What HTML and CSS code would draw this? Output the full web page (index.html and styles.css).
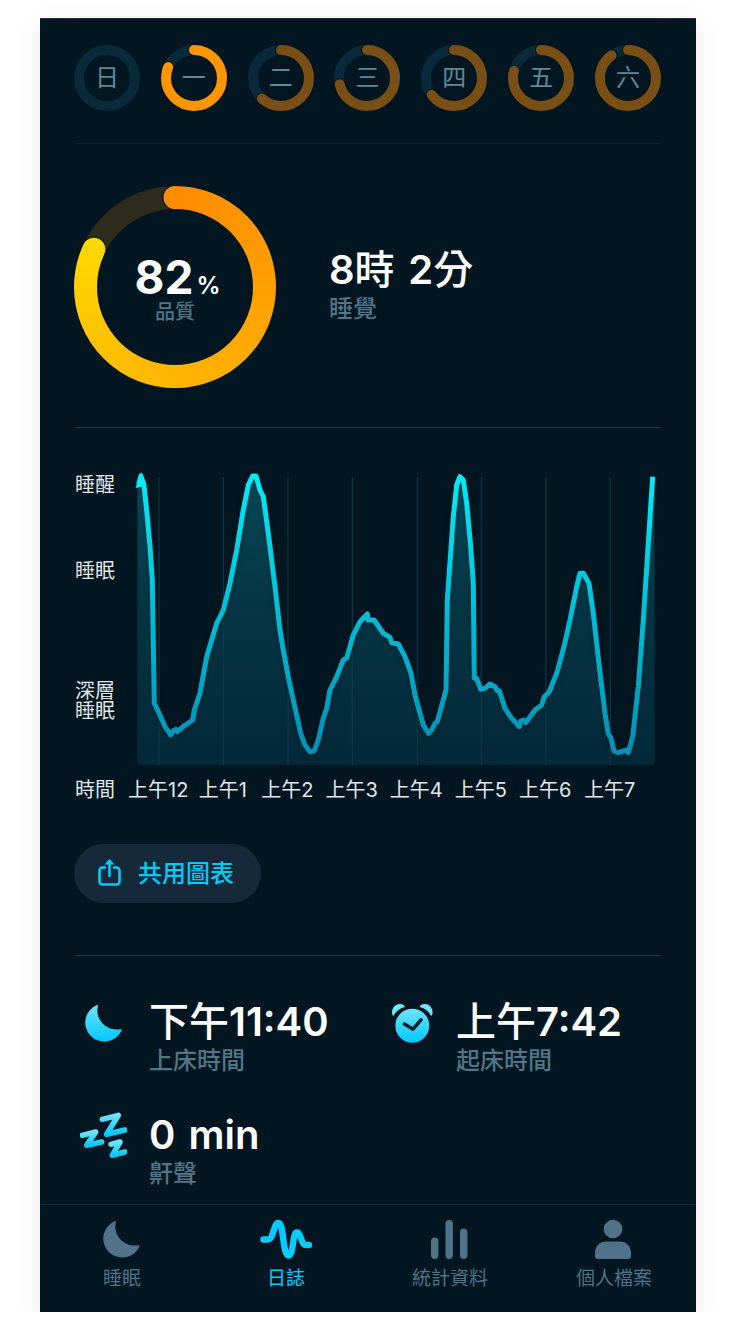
FILE: index.html
```html
<!DOCTYPE html>
<html>
<head>
  <title>Sleep journal</title>
  <meta name="viewport" content="width=device-width, initial-scale=1">
  <link rel="stylesheet" href="styles.css">
</head>
<body>
<div class="phone">

  <div class="week">
    <div class="day"><svg viewBox="0 0 66 66"><circle class="track" cx="33" cy="33" r="28"/></svg><span>日</span></div>
    <div class="day"><svg viewBox="0 0 66 66"><circle class="track" cx="33" cy="33" r="28"/><circle class="halo" cx="33" cy="33" r="28" pathLength="360" stroke-dasharray="293 360" transform="rotate(-90 33 33)"/><circle class="arc today" cx="33" cy="33" r="28" pathLength="360" stroke-dasharray="293 360" transform="rotate(-90 33 33)"/></svg><span>一</span></div>
    <div class="day"><svg viewBox="0 0 66 66"><circle class="track" cx="33" cy="33" r="28"/><circle class="halo" cx="33" cy="33" r="28" pathLength="360" stroke-dasharray="223 360" transform="rotate(-90 33 33)"/><circle class="arc" cx="33" cy="33" r="28" pathLength="360" stroke-dasharray="223 360" transform="rotate(-90 33 33)"/></svg><span>二</span></div>
    <div class="day"><svg viewBox="0 0 66 66"><circle class="track" cx="33" cy="33" r="28"/><circle class="halo" cx="33" cy="33" r="28" pathLength="360" stroke-dasharray="257 360" transform="rotate(-90 33 33)"/><circle class="arc" cx="33" cy="33" r="28" pathLength="360" stroke-dasharray="257 360" transform="rotate(-90 33 33)"/></svg><span>三</span></div>
    <div class="day"><svg viewBox="0 0 66 66"><circle class="track" cx="33" cy="33" r="28"/><circle class="halo" cx="33" cy="33" r="28" pathLength="360" stroke-dasharray="233 360" transform="rotate(-90 33 33)"/><circle class="arc" cx="33" cy="33" r="28" pathLength="360" stroke-dasharray="233 360" transform="rotate(-90 33 33)"/></svg><span>四</span></div>
    <div class="day"><svg viewBox="0 0 66 66"><circle class="track" cx="33" cy="33" r="28"/><circle class="halo" cx="33" cy="33" r="28" pathLength="360" stroke-dasharray="285 360" transform="rotate(-90 33 33)"/><circle class="arc" cx="33" cy="33" r="28" pathLength="360" stroke-dasharray="285 360" transform="rotate(-90 33 33)"/></svg><span>五</span></div>
    <div class="day"><svg viewBox="0 0 66 66"><circle class="track" cx="33" cy="33" r="28"/><circle class="halo" cx="33" cy="33" r="28" pathLength="360" stroke-dasharray="324 360" transform="rotate(-90 33 33)"/><circle class="arc" cx="33" cy="33" r="28" pathLength="360" stroke-dasharray="324 360" transform="rotate(-90 33 33)"/></svg><span>六</span></div>
  </div>

  <div class="summary">
    <div class="quality">
      <svg viewBox="0 0 202 202">
        <defs>
          <mask id="quality-mask" maskUnits="userSpaceOnUse" x="0" y="0" width="202" height="202">
            <circle cx="101" cy="101" r="89.5" fill="none" stroke="#fff" stroke-width="23" stroke-linecap="round" pathLength="360" stroke-dasharray="295 360" transform="rotate(-90 101 101)"/>
          </mask>
        </defs>
        <circle class="quality-track" cx="101" cy="101" r="89.5"/>
        <circle class="quality-halo" cx="101" cy="101" r="89.5" pathLength="360" stroke-dasharray="295 360" transform="rotate(-90 101 101)"/>
        <foreignObject x="0" y="0" width="202" height="202" mask="url(#quality-mask)">
          <div class="quality-fill"></div>
        </foreignObject>
      </svg>
      <div class="quality-text">
        <div class="quality-num">82<small>%</small></div>
        <div class="quality-label">品質</div>
      </div>
    </div>
    <div class="duration">
      <div class="value"><b>8</b>時 <b>2</b>分</div>
      <div class="label">睡覺</div>
    </div>
  </div>

  <div class="chart">
    <div class="y-labels">
      <span>睡醒</span>
      <span class="y-sleep">睡眠</span>
      <span class="y-deep">深層<br>睡眠</span>
    </div>
    <svg class="graph" viewBox="133 470 530 300" width="530" height="300">
      <defs>
        <linearGradient id="line-grad" gradientUnits="userSpaceOnUse" x1="0" y1="476" x2="0" y2="752">
          <stop offset="0" stop-color="#00ecf8"/>
          <stop offset="1" stop-color="#008fb4"/>
        </linearGradient>
        <linearGradient id="area-grad" gradientUnits="userSpaceOnUse" x1="0" y1="476" x2="0" y2="765">
          <stop offset="0" stop-color="#064857"/>
          <stop offset="0.45" stop-color="#043544"/>
          <stop offset="1" stop-color="#032838"/>
        </linearGradient>
      </defs>
      <path fill="url(#area-grad)" d="M137.5 765 L137.5 487 L141 476 L144 485 L147.3 516.7 L150 546.7 L152.3 580 L154.3 703.3 L160 715 L165 726.7 L170.7 735 L173.3 730.7 L175.7 729.3 L177.3 731.7 L184 726 L192.7 720 L194.3 710 L200 693.3 L206.7 656.7 L211.7 640 L216.7 623.3 L223.3 610 L230 583.3 L236.7 550 L242.7 513.3 L248.3 485 L252.7 476 L256 476 L260 490 L263.3 496.7 L268.3 533.3 L275 586.7 L280 630 L282.7 646.7 L288.3 676.7 L293.3 700 L300.7 733.3 L305 745 L310 751.7 L314.3 750.7 L318.3 740 L323.3 718.3 L326.7 708.3 L330 690 L336.7 676.7 L343.3 660 L346.7 658.3 L353.3 635 L360 621.7 L367.3 614 L368 620 L374 620 L383.3 633.3 L390 637.3 L391.7 642.7 L398.3 644 L405 656.7 L411 673.3 L415 695 L423.3 725 L428.3 733.3 L431.7 730 L435 723.3 L437.3 721.7 L446 690 L447.3 600 L453.3 516.7 L456.7 485 L460 476.7 L463.3 480 L466.7 503.3 L470.7 546.7 L473.3 583.3 L474.3 678.3 L476.7 678.3 L480.7 689.3 L485 688.3 L490 684 L495 686.7 L497.3 690.7 L499.3 690.7 L505 708.3 L511.7 718.3 L519.3 726.7 L520.7 721 L523.3 720 L525.7 722.7 L535 710 L541.7 705 L544 697.3 L549.3 691.7 L556.7 673.3 L564 646.7 L570 620 L576.7 586.7 L580 573.3 L583.3 573.3 L589 583.3 L593.3 613.3 L599.3 666.7 L605 713.3 L608.3 734 L610.7 737.3 L614 750.7 L618.3 752.7 L626.7 750 L628.3 752.7 L632.7 736.7 L638.3 686.7 L643.3 620 L648.3 543.3 L652.7 476.7 L654.5 476.7 L654.5 765 Z"/>
      <g class="grid">
        <line x1="159" y1="477" x2="159" y2="765"/>
        <line x1="223.3" y1="477" x2="223.3" y2="765"/>
        <line x1="288" y1="477" x2="288" y2="765"/>
        <line x1="352.3" y1="477" x2="352.3" y2="765"/>
        <line x1="417.3" y1="477" x2="417.3" y2="765"/>
        <line x1="481.3" y1="477" x2="481.3" y2="765"/>
        <line x1="546" y1="477" x2="546" y2="765"/>
        <line x1="610.3" y1="477" x2="610.3" y2="765"/>
      </g>
      <path class="sleep-line" stroke="url(#line-grad)" d="M138.500 485 L141 476 L144 485 L147.3 516.7 L150 546.7 L152.3 580 L154.3 703.3 L160 715 L165 726.7 L170.7 735 L173.3 730.7 L175.7 729.3 L177.3 731.7 L184 726 L192.7 720 L194.3 710 L200 693.3 L206.7 656.7 L211.7 640 L216.7 623.3 L223.3 610 L230 583.3 L236.7 550 L242.7 513.3 L248.3 485 L252.7 476 L256 476 L260 490 L263.3 496.7 L268.3 533.3 L275 586.7 L280 630 L282.7 646.7 L288.3 676.7 L293.3 700 L300.7 733.3 L305 745 L310 751.7 L314.3 750.7 L318.3 740 L323.3 718.3 L326.7 708.3 L330 690 L336.7 676.7 L343.3 660 L346.7 658.3 L353.3 635 L360 621.7 L367.3 614 L368 620 L374 620 L383.3 633.3 L390 637.3 L391.7 642.7 L398.3 644 L405 656.7 L411 673.3 L415 695 L423.3 725 L428.3 733.3 L431.7 730 L435 723.3 L437.3 721.7 L446 690 L447.3 600 L453.3 516.7 L456.7 485 L460 476.7 L463.3 480 L466.7 503.3 L470.7 546.7 L473.3 583.3 L474.3 678.3 L476.7 678.3 L480.7 689.3 L485 688.3 L490 684 L495 686.7 L497.3 690.7 L499.3 690.7 L505 708.3 L511.7 718.3 L519.3 726.7 L520.7 721 L523.3 720 L525.7 722.7 L535 710 L541.7 705 L544 697.3 L549.3 691.7 L556.7 673.3 L564 646.7 L570 620 L576.7 586.7 L580 573.3 L583.3 573.3 L589 583.3 L593.3 613.3 L599.3 666.7 L605 713.3 L608.3 734 L610.7 737.3 L614 750.7 L618.3 752.7 L626.7 750 L628.3 752.7 L632.7 736.7 L638.3 686.7 L643.3 620 L648.3 543.3 L652.7 476.7"/>
      <path class="line-tip" d="M135.500 488 L141 472 L145 486 Z"/>
    </svg>
  </div>

  <div class="x-labels">
    <span class="x-title">時間</span>
    <span>上午12</span>
    <span>上午1</span>
    <span>上午2</span>
    <span>上午3</span>
    <span>上午4</span>
    <span>上午5</span>
    <span>上午6</span>
    <span>上午7</span>
  </div>

  <div class="share-row">
    <div class="share">
      <svg viewBox="0 0 23 28" width="23" height="28">
        <path class="share-box" d="M7 9.5H4.5a3 3 0 0 0-3 3V23.500a3 3 0 0 0 3 3h14a3 3 0 0 0 3-3V12.500a3 3 0 0 0-3-3H16"/>
        <path class="share-stem" d="M11.500 18V4"/>
        <path class="share-head" d="M6.500 6.500 11.500 1l5 5.500z"/>
      </svg>
      <span>共用圖表</span>
    </div>
  </div>

  <div class="stats">
    <div class="stat">
      <div class="stat-icon">
        <svg class="icon-moon" viewBox="0 0 38 40" width="38" height="40">
          <defs>
            <linearGradient id="icon-grad" x1="0" y1="0" x2="0" y2="1">
              <stop offset="0" stop-color="#6fe3fa"/>
              <stop offset="1" stop-color="#00c8ff"/>
            </linearGradient>
          </defs>
          <path fill="url(#icon-grad)" d="M13 1A19 19 0 1 0 37.500 26.500C37.800 25.800 37.300 25.200 36.500 25.300 24 27.500 10.500 17 13.900 2 14.100 1.200 13.700.8 13 1Z"/>
        </svg>
      </div>
      <div>
        <div class="value">下午<b>11:40</b></div>
        <div class="label">上床時間</div>
      </div>
    </div>
    <div class="stat">
      <div class="stat-icon">
        <svg class="icon-alarm" viewBox="0 0 44 41" width="44" height="41">
          <path fill="#6fe3fa" d="M2.500 12C.5 6 5 .8 10 1 12.500 1 14.500 2.300 15 4 9.500 5.500 6 8.300 3.800 12.500 3.200 13 2.700 12.800 2.500 12Z"/>
          <path fill="#6fe3fa" d="M42.100 12C44.100 6 39.600 .8 34.600 1 32.100 1 30.100 2.300 29.600 4 35.100 5.500 38.600 8.300 40.800 12.500 41.400 13 41.900 12.800 42.100 12Z"/>
          <circle cx="22.300" cy="22.800" r="17" fill="url(#icon-grad)"/>
          <path class="alarm-check" d="M14.500 21l8.500 5.200L31 16.800"/>
        </svg>
      </div>
      <div>
        <div class="value">上午<b>7:42</b></div>
        <div class="label">起床時間</div>
      </div>
    </div>
    <div class="stat">
      <div class="stat-icon">
        <svg class="icon-zzz" viewBox="0 0 47 47" width="47" height="47">
          <path class="zzz" d="M22.300 8.300 38.300 4.300 26.700 23.300 45 19"/>
          <path class="zzz" d="M2.300 24.300 15.700 21 6.700 34.300 21.700 31"/>
          <path class="zzz" d="M31 33.300 40 31 32.300 44.300 45 41"/>
        </svg>
      </div>
      <div>
        <div class="value"><b>0 min</b></div>
        <div class="label">鼾聲</div>
      </div>
    </div>
  </div>

  <div class="tabs">
    <div class="tab">
      <svg viewBox="0 0 38 40" width="38" height="40"><path fill="#507389" d="M13 2A19 19 0 1 0 37.500 27.500C37.800 26.800 37.300 26.200 36.500 26.300 24 28.500 10.500 18 13.900 3 14.100 2.200 13.700 1.800 13 2Z"/></svg>
      <span>睡眠</span>
    </div>
    <div class="tab active">
      <svg viewBox="0 0 52 40" width="52" height="40"><path class="wave" d="M3.500 20.500H8C13.500 20.500 13.500 4 18.500 4 24 4 22.500 36.500 28.500 36.500 34 36.500 32 13.500 37 13.500 41 13.500 41 26 46 26H49"/></svg>
      <span>日誌</span>
    </div>
    <div class="tab">
      <svg viewBox="0 0 38 40" width="38" height="40">
        <rect x="1" y="18.500" width="7.400" height="21.500" rx="3.700" fill="#507389"/>
        <rect x="15.500" y="1" width="7.400" height="39" rx="3.700" fill="#507389"/>
        <rect x="30" y="9.500" width="7.400" height="30.500" rx="3.700" fill="#507389"/>
      </svg>
      <span>統計資料</span>
    </div>
    <div class="tab">
      <svg viewBox="0 0 38 40" width="38" height="40">
        <circle cx="19" cy="10" r="9.300" fill="#507389"/>
        <path fill="#507389" d="M1 37V34C1 27 6 22.500 12 22.500H26C32 22.500 37 27 37 34V37C37 39 36 40 34.500 40H3.500C2 40 1 39 1 37Z"/>
      </svg>
      <span>個人檔案</span>
    </div>
  </div>

</div>
</body>
</html>
```

FILE: styles.css
```css
* {
  box-sizing: border-box;
}

body {
  margin: 0;
  background-color: white;
  font-family: Inter, "Noto Sans CJK TC", sans-serif;
  color: white;
}

.phone {
  width: 656px;
  height: 1294px;
  margin: 18px 0 0 40px;
  background-color: #011621;
  border-top: 1px solid #1c3442;
  box-shadow: 0 6px 24px rgba(0, 0, 0, 0.1);
  display: flex;
  flex-direction: column;
}

/* week rings */
.week {
  height: 125px;
  margin: 0 35px 0 34px;
  padding-top: 26px;
  display: flex;
  justify-content: space-between;
  border-bottom: 1px solid #0a2431;
}

.day {
  width: 66px;
  height: 66px;
  position: relative;
}

.day svg {
  display: block;
  width: 66px;
  height: 66px;
}

.day span {
  position: absolute;
  top: 0;
  left: 0;
  width: 66px;
  line-height: 66px;
  text-align: center;
  font-size: 24px;
  color: #628797;
}

.track,
.halo,
.arc {
  fill: none;
}

.track {
  stroke: #082a3b;
  stroke-width: 10;
}

.halo {
  stroke: #011621;
  stroke-width: 12;
  stroke-linecap: round;
}

.arc {
  stroke: #7a4f16;
  stroke-width: 10;
  stroke-linecap: round;
}

.arc.today {
  stroke: #ff9500;
}

/* quality ring and duration */
.summary {
  height: 284px;
  margin: 0 35px;
  padding-top: 42px;
  display: flex;
  border-bottom: 1px solid #123849;
}

.quality {
  width: 202px;
  height: 202px;
  margin-left: -1px;
  position: relative;
}

.quality svg {
  display: block;
  width: 202px;
  height: 202px;
}

.quality-track,
.quality-halo {
  fill: none;
  stroke-width: 23;
}

.quality-track {
  stroke: #2e2a1c;
}

.quality-halo {
  stroke: #011621;
  stroke-width: 25;
  stroke-linecap: round;
}

.quality-fill {
  width: 202px;
  height: 202px;
  background: conic-gradient(#ff8c00 0deg, #ff9f00 90deg, #ffb600 180deg, #ffc400 240deg, #ffd800 300deg, #ffd800 330deg, #ff8c00 345deg);
}

.quality-text {
  position: absolute;
  top: 68px;
  left: 0;
  width: 202px;
  text-align: center;
}

.quality-num {
  font-size: 46px;
  font-weight: 700;
  line-height: 46px;
  padding-left: 5px;
}

.quality-num small {
  font-size: 24px;
  font-weight: 600;
  line-height: 1;
  margin-left: 3px;
}

.quality-label {
  font-size: 20px;
  font-weight: 500;
  line-height: 24px;
  color: #527587;
}

.duration {
  margin-left: 53px;
  padding-top: 64px;
}

.value {
  font-size: 40px;
  font-weight: 500;
  line-height: 40px;
  word-spacing: 3px;
  white-space: nowrap;
}

.value b {
  font-weight: 600;
}

.label {
  font-size: 24px;
  font-weight: 500;
  line-height: 30px;
  margin-top: 4px;
  color: #527587;
}

/* sleep graph */
.chart {
  margin-left: 35px;
  padding-top: 42px;
  display: flex;
}

.y-labels {
  width: 58px;
  padding-top: 5px;
}

.y-labels span {
  display: block;
  font-size: 20px;
  line-height: 20px;
  color: #e2e6e8;
}

.y-labels .y-sleep {
  margin-top: 66px;
}

.y-labels .y-deep {
  margin-top: 100px;
}

.graph {
  display: block;
}

.grid line {
  stroke: #0f3d50;
  stroke-width: 1;
}

.sleep-line {
  fill: none;
  stroke-width: 5;
  stroke-linejoin: round;
  filter: drop-shadow(0 2px 2px rgba(0, 0, 0, 0.25));
}

.line-tip {
  fill: #00ecf8;
}

.x-labels {
  margin: 10px 0 0 35px;
  display: flex;
  font-size: 20px;
  line-height: 20px;
  color: #e2e6e8;
  white-space: nowrap;
}

.x-labels span {
  width: 64.5px;
  text-align: center;
}

.x-labels .x-title {
  width: 51px;
  text-align: left;
}

/* share button */
.share-row {
  margin: 44px 35px 0;
  padding-bottom: 52px;
  border-bottom: 1px solid #123849;
}

.share {
  width: 187px;
  height: 59px;
  margin-left: -1px;
  padding: 0 0 4px 24px;
  border-radius: 30px;
  background-color: #15293a;
  display: flex;
  align-items: center;
  gap: 17px;
  font-size: 24px;
  font-weight: 500;
  color: #00ccf5;
}

.share-box,
.share-stem {
  fill: none;
  stroke: #00ccf5;
  stroke-width: 2.6;
  stroke-linecap: round;
}

.share-head {
  fill: #00ccf5;
}

/* bedtime, wake up, snore */
.stats {
  margin: 46px 0 0 35px;
  display: grid;
  grid-template-columns: 307px 1fr;
  row-gap: 39px;
}

.stat {
  display: flex;
}

.stat-icon {
  width: 74px;
  flex: none;
}

.stat-icon svg {
  display: block;
}

.icon-moon {
  margin: 2px 0 0 9px;
}

.icon-alarm {
  margin: 1px 0 0 8px;
}

.icon-zzz {
  margin: -4px 0 0 5px;
}

.alarm-check {
  fill: none;
  stroke: #02202f;
  stroke-width: 3.6;
  stroke-linecap: round;
  stroke-linejoin: round;
}

.zzz {
  fill: none;
  stroke: url(#icon-grad);
  stroke-width: 5.5;
  stroke-linecap: round;
  stroke-linejoin: round;
}

/* tab bar */
.tabs {
  margin-top: auto;
  height: 108px;
  display: flex;
  border-top: 1px solid #12303f;
}

.tab {
  width: 25%;
  padding-top: 14px;
  display: flex;
  flex-direction: column;
  align-items: center;
  font-size: 19px;
  line-height: 24px;
  color: #507389;
}

.tab svg {
  display: block;
  margin: 0 3px 8px 0;
}

.tab.active svg {
  margin-right: 0;
}

.tab.active {
  color: #00ccff;
}

.wave {
  fill: none;
  stroke: #00ccff;
  stroke-width: 6.4;
  stroke-linecap: round;
  stroke-linejoin: round;
}
```
